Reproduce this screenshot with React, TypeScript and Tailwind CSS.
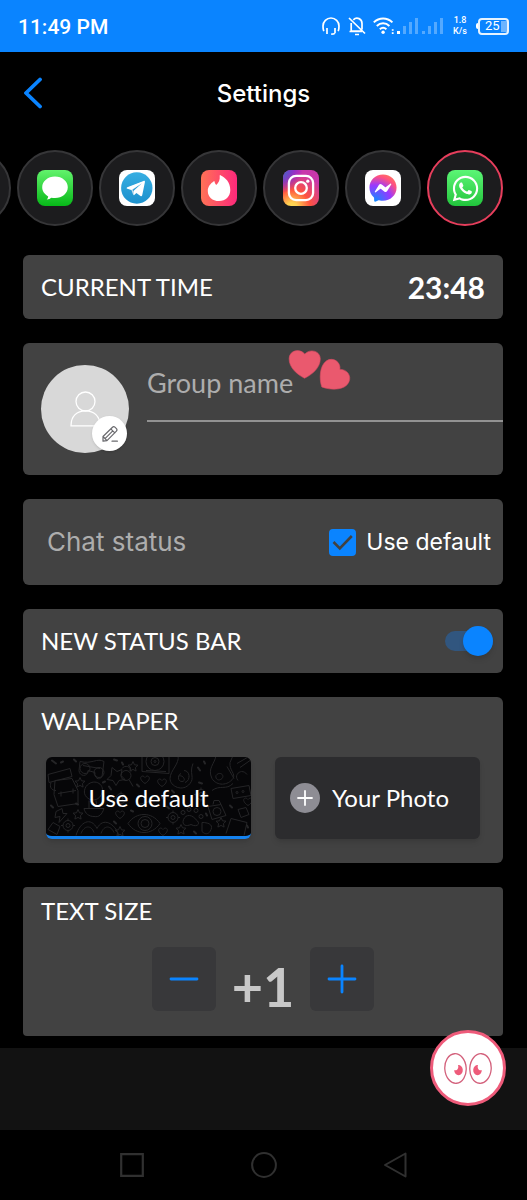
import { useState, type ReactNode } from "react";
import { FaFacebookMessenger, FaWhatsapp } from "react-icons/fa";

const card = "rounded-md bg-[#424242]";
const heading = "font-['Lato',sans-serif] text-2xl leading-8 text-white";

function StatusBar() {
  return (
    <header className="flex h-[52px] items-center justify-between bg-[#0a84ff] pl-[18px] pr-[18px] text-white">
      <time className="pt-0.5 font-['Roboto',sans-serif] text-[21px] font-medium leading-6">11:49 PM</time>
      <div className="flex items-center">
        <svg className="mr-2 h-[18px] w-[18px]" viewBox="0 0 18 18" fill="none" stroke="currentColor" strokeWidth="1.7" aria-hidden="true">
          <path d="M1.8 14.2C1 12.4 1 10.8 1 9a8 8 0 0 1 16 0c0 1.800 0 3.400-.8 5.200M5 11v6M13 11v5.200M12.800 16.400c-.8.600-2 .7-3.600.7" />
        </svg>
        <svg className="mr-[7px] h-5 w-[18px]" viewBox="0 0 18 20" fill="none" stroke="currentColor" strokeWidth="1.700" aria-hidden="true">
          <path d="M1 2l16 15.500M5.300 3.800C9 .2 14 3 14 7.500v6M3.200 7v8.200H14M1.500 15.500h12.500M7 18.500h4" />
        </svg>
        <svg className="mr-0.5 h-[18px] w-[22px]" viewBox="0 0 22 18" fill="none" stroke="currentColor" strokeWidth="2" aria-hidden="true">
          <path d="M.8 5.400c5.400-5.200 13.200-5.200 18.600 0M3.800 8.900c3.700-3.500 8.900-3.500 12.600 0M6.800 12.200c2-1.800 4.600-1.800 6.600 0" />
          <circle cx="10.100" cy="15.300" r="1.700" fill="currentColor" stroke="none" />
          <path d="M18.800 13h1.800M18.800 16.200h1.800" strokeWidth="1.700" />
        </svg>
        <svg className="mr-2 h-[18px] w-[47px]" viewBox="0 0 47 18" fill="currentColor" aria-hidden="true">
          <rect x="0" y="14" width="3" height="3" />
          <g opacity=".3">
            <rect x="6" y="9" width="3" height="8" /><rect x="12" y="5" width="3" height="12" /><rect x="18" y="1" width="3" height="16" />
            <rect x="25" y="14" width="3" height="3" /><rect x="31" y="9" width="3" height="8" /><rect x="37" y="5" width="3" height="12" /><rect x="43" y="1" width="3" height="16" />
          </g>
        </svg>
        <div className="mr-2 flex w-4 flex-col text-center font-['Roboto',sans-serif] text-[9px] font-medium leading-[11px]">
          <span>1.8</span>
          <span>K/s</span>
        </div>
        <div className="flex items-center">
          <span className="h-1.5 w-0.5 rounded-l-sm bg-white" />
          <span className="flex h-[17px] w-[31px] items-center rounded border-2 border-white/90 pl-[5px] font-['Roboto',sans-serif] text-[13px] leading-3">
            25<span className="ml-px h-[11px] w-1.5 bg-white/40" />
          </span>
        </div>
      </div>
    </header>
  );
}

function MessagesIcon() {
  return (
    <svg viewBox="0 0 36 36" className="h-9 w-9" aria-hidden="true">
      <defs>
        <linearGradient id="msg" x2="0" y2="1"><stop stopColor="#62f36c" /><stop offset="1" stopColor="#07b818" /></linearGradient>
      </defs>
      <rect width="36" height="36" rx="8" fill="url(#msg)" />
      <path d="M18 6.500c7.200 0 12.800 4.800 12.800 10.800S25.200 28.100 18 28.100c-1.300 0-2.500-.1-3.600-.4-1 .8-2.800 1.700-4.700 1.800.9-.9 1.400-2 1.500-3.100-3.700-2-6-5.300-6-9.100C5.200 11.300 10.800 6.500 18 6.500z" fill="#fff" />
    </svg>
  );
}

function TelegramIcon() {
  return (
    <svg viewBox="0 0 36 36" className="h-9 w-9" aria-hidden="true">
      <defs>
        <linearGradient id="tg" x2="0" y2="1"><stop stopColor="#36aee2" /><stop offset="1" stopColor="#1d91cd" /></linearGradient>
      </defs>
      <rect width="36" height="36" rx="8" fill="#fff" />
      <circle cx="17.800" cy="18" r="15.700" fill="url(#tg)" />
      <path d="M8.400 17.700L25.500 11.100 13.700 19.700 15 24.600c-.7 0-1-.4-1.200-.9l-1.700-4.500z" fill="#c8daea" />
      <path d="M8.300 17.200L24.600 10.900c.9-.3 1.500.2 1.300 1.300l-2.700 13c-.2 1-.9 1.200-1.700.8l-4.100-3-2.200 2c-.3.300-.5.400-.7-.4l-.1-3.500 8.500-7.800-10.700 6.700-3.800-1.300c-1-.3-1-1-.1-1.500z" fill="#fff" />
    </svg>
  );
}

function TinderIcon() {
  return (
    <svg viewBox="0 0 36 36" className="h-9 w-9" aria-hidden="true">
      <defs>
        <linearGradient id="tinder"><stop stopColor="#ff7256" /><stop offset="1" stopColor="#fd297b" /></linearGradient>
      </defs>
      <rect width="36" height="36" rx="8" fill="url(#tinder)" />
      <path d="M19.400 5.200c-.3-.2-.8 0-.7.500.5 4.200-1.200 7.400-3.500 9.200-1-.9-1.500-2-1.600-3.300 0-.4-.5-.6-.8-.3-3.200 2.200-6 5.500-6 9.600 0 5.900 4.500 10.100 11.200 10.100s11.300-4.500 11.300-11C29.300 12.200 24.500 7.500 19.400 5.200z" fill="#fff" />
    </svg>
  );
}

function InstagramIcon() {
  return (
    <svg viewBox="0 0 36 36" className="h-9 w-9" aria-hidden="true">
      <defs>
        <radialGradient id="igwarm" cx=".25" cy="1.050" r="1"><stop stopColor="#ffdd55" /><stop offset=".15" stopColor="#ffcf50" /><stop offset=".5" stopColor="#ff543e" /><stop offset="1" stopColor="#c837ab" /></radialGradient>
        <radialGradient id="igcool" cx="-.1" cy="0" r=".65"><stop stopColor="#3771c8" /><stop offset=".3" stopColor="#5a57c6" /><stop offset="1" stopColor="#6600ff" stopOpacity="0" /></radialGradient>
      </defs>
      <rect width="36" height="36" rx="8" fill="url(#igwarm)" />
      <rect width="36" height="36" rx="8" fill="url(#igcool)" />
      <g fill="none" stroke="#fff" strokeWidth="2.300">
        <rect x="5.900" y="5.900" width="24.200" height="24.200" rx="7.200" />
        <circle cx="18" cy="18" r="5.800" />
      </g>
      <circle cx="24.800" cy="11.200" r="1.600" fill="#fff" />
    </svg>
  );
}

function MessengerIcon() {
  return (
    <span className="flex h-9 w-9 items-center justify-center rounded-lg bg-white">
      <svg className="absolute h-0 w-0" aria-hidden="true">
        <defs>
          <radialGradient id="fbm" cx=".2" cy="1" r="1.100"><stop stopColor="#0a8dff" /><stop offset=".55" stopColor="#9a38ff" /><stop offset=".85" stopColor="#ff5280" /><stop offset="1" stopColor="#ff7061" /></radialGradient>
        </defs>
      </svg>
      <FaFacebookMessenger size={28} fill="url(#fbm)" aria-hidden="true" />
    </span>
  );
}

function WhatsAppIcon() {
  return (
    <span className="flex h-9 w-9 items-center justify-center rounded-lg bg-linear-to-b from-[#5bf675] to-[#20c53c] text-white">
      <FaWhatsapp size={29} aria-hidden="true" />
    </span>
  );
}

const apps: { name: string; icon: ReactNode }[] = [
  { name: "More", icon: null },
  { name: "Messages", icon: <MessagesIcon /> },
  { name: "Telegram", icon: <TelegramIcon /> },
  { name: "Tinder", icon: <TinderIcon /> },
  { name: "Instagram", icon: <InstagramIcon /> },
  { name: "Messenger", icon: <MessengerIcon /> },
  { name: "WhatsApp", icon: <WhatsAppIcon /> },
];

function Doodles() {
  return (
    <svg className="absolute inset-0 h-full w-full" viewBox="0 0 205 82" preserveAspectRatio="xMidYMid slice" fill="none" stroke="#252527" strokeWidth="1" aria-hidden="true">
      <defs>
        <path id="star" d="M0-5l1.500 3.300 3.500.4-2.600 2.400.7 3.500L0 2.900l-3.100 1.700.7-3.500L-5-1.300l3.500-.4z" />
        <path id="heart" d="M0 4C-8-1-3-6 0-2 3-6 8-1 0 4z" />
        <g id="flower"><circle r="2" /><circle r="5" /><path d="M0-5v-2M5 0h2M0 5v2M-5 0h-2" /></g>
      </defs>
      <path d="M2 19l22-6 2 8-23 6zM9 25l17-2 6 12v13l-20 3-4-12zM12 38l18-3M15 36v5M27 33v5M5 27c-2 5 1 8 5 8" />
      <path d="M34 6c12 3 17-4 24 0l-2 15c-3 5-8 1-7-4l-7-2c0 7-9 6-9 0zM37 10l17 3" />
      <circle cx="39" cy="13" r="5" /><circle cx="53" cy="17" r="5" />
      <path d="M66 12l5 4 5-2-1 6 4 4-6 1-3 5-3-5-6-1 4-4z" /><circle cx="80" cy="20" r="5" /><path d="M83 24l4 7M76 13c3-4 9-2 9 3" />
      <path d="M96 0v16l27 2V0M100 15l20 1" /><circle cx="109" cy="6" r="9" /><circle cx="109" cy="6" r="4" /><circle cx="109" cy="6" r="1" />
      <path d="M132 0c2 8-8 15-8 23 0 8 13 14 20 5 5-6-1-10 3-20M132 21c5-3 9 5 4 5s-4-7-1-8M138 15c6 0 7 10 1 12" />
      <path d="M170 0c-1 8-9 13-4 23 5 8 16 7 21 0 3-5-4-8-3-16l3-7M170 20c4-5 9 0 6 3s-7 1-6-3M181 11l7 12" />
      <path d="M191 8l12-7M194 12l10-7M192 25c-5-6 4-13 9-6M185 33l18-3 2 10-18 3z" /><circle cx="191" cy="37" r="1" /><circle cx="197" cy="36" r="1" />
      <path d="M40 31c7-9 19-3 16 6-1 5-6 9-12 7-6-3-7-8-4-13zM43 45v8M50 45l1 7M38 53h20c-2 6-5 9-10 8-5 0-9-3-10-8" />
      <path d="M30 80c4-14 15-19 21-7 6-12 18-5 22 7M35 78c3-8 10-9 13-1M55 78c3-9 10-8 13-1" />
      <path d="M82 68c8-12 24-12 32 0-8 12-24 12-32 0z" /><circle cx="99" cy="68" r="7" /><circle cx="99" cy="68" r="4" />
      <path d="M162 51l13-2 5 11-14 4zM167 49l1-4h5l2 4" /><circle cx="171" cy="56" r="4" />
      <path d="M137 66c1-6 7-9 13-2 6 5 0 8-5 5-5 2-8 1-8-3z" /><circle cx="137" cy="57" r="2" /><circle cx="143" cy="54" r="2" /><circle cx="150" cy="55" r="2" /><circle cx="155" cy="61" r="2" />
      <path d="M10 56l6-3 1 5h4l-8 9 1-6-5 1zM156 67c8 0 12 3 8 9-2 3-5 3-8 0zM180 78l5-15 16 4-3 13M2 74l5-7 7 4-3 8zM166 35c8-6 14 0 21-7M192 54l8-2 3 7-8 3zM90 49c8 0 13-5 23-3" />
      <use href="#star" x="87" y="11" /><use href="#star" x="32" y="59" /><use href="#star" x="74" y="76" /><use href="#star" x="135" y="74" /><use href="#star" x="34" y="27" /><use href="#star" x="175" y="67" />
      <use href="#heart" x="99" y="24" /><use href="#heart" x="116" y="27" /><use href="#heart" x="74" y="59" /><use href="#heart" x="202" y="46" /><use href="#heart" x="117" y="76" />
      <use href="#flower" x="127" y="62" /><use href="#flower" x="22" y="70" /><use href="#flower" x="75" y="43" /><use href="#flower" x="155" y="39" />
      <path d="M6 5l4 3M28 4l2 2M68 4l3 1M76 7l1 2M91 29l2 2M63 31l2 3M152 12l2 3M158 6l1 2M153 27l3 1M116 42l2 1M126 35l2 2M5 50l2 2M30 48l2 1M68 66l2 2M85 55l2 1M121 51l2 2M160 58l1 2M184 50l2 2M148 76l2 2M201 70l1 2M15 7l2-1M57 27l2-1" strokeWidth="2" strokeLinecap="round" />
    </svg>
  );
}

function AppPicker() {
  const [active, setActive] = useState("WhatsApp");
  return (
    <nav aria-label="Apps" className="flex justify-end gap-1.5 overflow-hidden pr-6 pt-4">
      {apps.map((app) => (
        <button
          key={app.name}
          type="button"
          aria-label={app.name}
          aria-pressed={active === app.name}
          onClick={() => setActive(app.name)}
          className={`flex h-[76px] w-[76px] shrink-0 items-center justify-center rounded-full border-2 bg-[#1c1c1e] ${active === app.name ? "border-[#e63e5c]" : "border-[#363638]"}`}
        >
          {app.icon}
        </button>
      ))}
    </nav>
  );
}

function GroupCard() {
  return (
    <section className={`${card} flex h-[132px] pl-[18px] pt-[22px]`}>
      <div className="relative h-[88px] w-[88px] shrink-0 rounded-full bg-[#d8d8d8]">
        <svg className="absolute left-[29px] top-[26px] h-9 w-[31px]" viewBox="0 0 31 36" fill="none" stroke="#fff" strokeWidth="1.300" aria-hidden="true">
          <circle cx="15.500" cy="10.500" r="9.500" />
          <path d="M1 34.800C1 25 7 19.800 15.500 19.800S30 25 30 34.800z" />
        </svg>
        <button type="button" aria-label="Edit photo" className="absolute bottom-0.5 right-0.5 flex h-[35px] w-[35px] items-center justify-center rounded-full bg-white shadow">
          <svg className="h-4 w-4" viewBox="0 0 16 16" fill="none" stroke="#69696d" strokeWidth="1.200" strokeLinejoin="round" strokeLinecap="round" aria-hidden="true">
            <path d="M1 10.500L10.500 1.200c.8-.8 1.600-.8 2.400 0l1.500 1.500c.8.800.8 1.600 0 2.400L5 14.600l-4 .6zM1 10.500L5 14.600M8.800 2.900l4 4M3 12.600l7.800-7.700M10 15.200h5.400" />
          </svg>
        </button>
      </div>
      <div className="relative ml-[18px] min-w-0 flex-1">
        <input aria-label="Group name" placeholder="Group name" className="h-[57px] w-full border-b-2 border-[#929292] bg-transparent pb-[21px] font-['Lato',sans-serif] text-[27px] leading-8 text-white outline-none placeholder:text-[#adadad] placeholder:opacity-100" />
        <svg className="absolute -top-4 left-[141px] h-[42px] w-[64px]" viewBox="0 0 64 42" aria-hidden="true">
          <g fill="#ea596e" stroke="#d94a61" strokeWidth=".6">
            <path d="M16.500 29.200C9 25.500 1 18.500 1.100 9.700 1.200 1.500 11.500-1.300 16.800 5.100 22-.8 32.300 1.800 32.300 9.800c0 9-8 15.700-15.800 19.400z" />
            <path d="M33.800 38C31 30 31.500 16.500 38.500 11.800c6.800-4.300 14.600 1.400 13.400 8.600 7.200-.3 11.900 6.500 9 12.600C57.400 41.300 43.500 41.500 33.800 38z" />
          </g>
        </svg>
      </div>
    </section>
  );
}

function StatusCard() {
  return (
    <section className={`${card} flex h-[86px] items-center pl-6 pr-3 font-['Inter',sans-serif]`}>
      <input aria-label="Chat status" placeholder="Chat status" className="min-w-0 flex-1 bg-transparent text-[26px] leading-8 text-white outline-none placeholder:text-[#adadad] placeholder:opacity-100" />
      <label className="flex items-center gap-2.5 text-[23px] leading-8 text-white">
        <span className="relative h-[27px] w-[27px]">
          <input type="checkbox" defaultChecked className="peer block h-full w-full appearance-none rounded-sm border-2 border-[#0a84ff] checked:bg-[#0a84ff]" />
          <svg className="pointer-events-none absolute inset-0 hidden h-full w-full peer-checked:block" viewBox="0 0 27 27" fill="none" stroke="#424242" strokeWidth="2.600" aria-hidden="true">
            <path d="M4.500 13l6.300 6.300L22.800 7" />
          </svg>
        </span>
        Use default
      </label>
    </section>
  );
}

function SwitchCard() {
  return (
    <label className={`${card} flex h-16 items-center justify-between pl-[18px] pr-2.5`}>
      <span className={heading}>NEW STATUS BAR</span>
      <span className="relative flex h-[30px] w-12 items-center">
        <input type="checkbox" role="switch" defaultChecked className="peer h-5 w-full appearance-none rounded-full bg-neutral-600 checked:bg-[#31567f]" />
        <span className="pointer-events-none absolute left-0 h-[30px] w-[30px] rounded-full bg-neutral-300 shadow-md peer-checked:left-[18px] peer-checked:bg-[#0a84ff]" />
      </span>
    </label>
  );
}

function WallpaperCard() {
  return (
    <section className={`${card} px-[18px] pb-6 pt-2`}>
      <h2 className={heading}>WALLPAPER</h2>
      <div className="mt-5 grid grid-cols-2 gap-6 px-[5px] font-['Lato',sans-serif] text-2xl leading-8 text-white">
        <button type="button" className="relative flex h-[82px] items-center justify-center overflow-hidden rounded-md border-b-[3px] border-[#1582ee] bg-[#060608] shadow-md">
          <Doodles />
          <span className="relative pt-0.5">Use default</span>
        </button>
        <button type="button" className="flex h-[82px] items-center gap-3 rounded-md bg-[#2c2c2e] pl-[15px] shadow-md">
          <svg className="h-[30px] w-[30px]" viewBox="0 0 30 30" fill="none" aria-hidden="true">
            <circle cx="15" cy="15" r="15" fill="#8e8d94" />
            <path d="M8 15h14M15 8v14" stroke="#fff" strokeWidth="1.800" strokeLinecap="round" />
          </svg>
          Your Photo
        </button>
      </div>
    </section>
  );
}

function TextSizeCard() {
  const [size, setSize] = useState(1);
  const button = "flex h-16 w-16 items-center justify-center rounded-md bg-[#38383a]";
  return (
    <section className="rounded-sm bg-[#424242] px-[18px] pb-6 pt-2">
      <h2 className={heading}>TEXT SIZE</h2>
      <div className="mt-5 flex h-[65px] justify-center">
        <button type="button" aria-label="Smaller" className={button} onClick={() => setSize(size - 1)}>
          <svg className="h-[30px] w-[30px]" viewBox="0 0 30 30" stroke="#0a84ff" strokeWidth="2.800" strokeLinecap="round" aria-hidden="true"><path d="M2 15h26" /></svg>
        </button>
        <output className="w-[94px] pt-2 text-center font-['Lato',sans-serif] text-[54px] font-bold leading-[64px] text-[#c8c8c8]">
          {size > 0 ? `+${size}` : size}
        </output>
        <button type="button" aria-label="Larger" className={button} onClick={() => setSize(size + 1)}>
          <svg className="h-[30px] w-[30px]" viewBox="0 0 30 30" stroke="#0a84ff" strokeWidth="2.800" strokeLinecap="round" aria-hidden="true"><path d="M2 15h26M15 2v26" /></svg>
        </button>
      </div>
    </section>
  );
}

function SystemNav() {
  const icon = "h-[26px] w-[26px]";
  return (
    <nav aria-label="System" className="flex h-[70px] items-center justify-center gap-[106px] bg-black text-[#303030]">
      <button type="button" aria-label="Recent apps">
        <svg className={icon} viewBox="0 0 26 26" fill="none" stroke="currentColor" strokeWidth="2.200" aria-hidden="true"><path d="M2.200 2.200h21.600v21.600H2.200z" /></svg>
      </button>
      <button type="button" aria-label="Home">
        <svg className={icon} viewBox="0 0 26 26" fill="none" stroke="currentColor" strokeWidth="2" aria-hidden="true"><circle cx="13" cy="13" r="11.900" /></svg>
      </button>
      <button type="button" aria-label="Back">
        <svg className={icon} viewBox="0 0 26 26" fill="none" stroke="currentColor" strokeWidth="2" strokeLinejoin="round" aria-hidden="true"><path d="M22.500 1.500v23L2 13z" /></svg>
      </button>
    </nav>
  );
}

export default function App() {
  return (
    <div className="flex min-h-screen flex-col bg-black">
      <StatusBar />
      <div className="flex h-[82px] items-center px-6">
        <button type="button" aria-label="Back" className="w-10 text-[#0a84ff]">
          <svg className="h-8 w-[18px]" viewBox="0 0 18 32" fill="none" stroke="currentColor" strokeWidth="3.800" strokeLinecap="round" strokeLinejoin="round" aria-hidden="true"><path d="M16 2.500L2 16l14 13.500" /></svg>
        </button>
        <h1 className="flex-1 pr-10 pt-0.5 text-center font-['Inter',sans-serif] text-2xl font-medium leading-8 text-white">Settings</h1>
      </div>
      <AppPicker />
      <main className="flex flex-col gap-6 pb-3 pl-[23px] pr-6 pt-[29px]">
        <section className={`${card} flex h-16 items-center justify-between px-[18px]`}>
          <h2 className={heading}>CURRENT TIME</h2>
          <time className="font-['Lato',sans-serif] text-[30px] font-bold leading-8 text-white">23:48</time>
        </section>
        <GroupCard />
        <StatusCard />
        <SwitchCard />
        <WallpaperCard />
        <TextSizeCard />
      </main>
      <footer className="relative min-h-[82px] flex-1 bg-[#121212]">
        <button type="button" aria-label="Preview" className="absolute -top-[18px] right-[21px] flex h-[76px] w-[76px] items-center justify-center rounded-full border-[3px] border-[#ee5b7a] bg-white">
          <svg className="h-[31px] w-12" viewBox="0 0 48 31" fill="none" stroke="#d3607b" strokeWidth="1.300" aria-hidden="true">
            <ellipse cx="11.500" cy="15.500" rx="10.700" ry="14.800" transform="rotate(-4 11.500 15.500)" />
            <ellipse cx="36.500" cy="15.500" rx="10.700" ry="14.800" transform="rotate(4 36.500 15.500)" />
            <g fill="#ee5b7a" stroke="none">
              <path d="M14 12a4.300 5.100 0 1 1-3.800 5c2.400 1.300 5-1.600 3.800-5z" />
              <path d="M34 12a4.300 5.100 0 1 0 3.800 5c-2.400 1.300-5-1.600-3.800-5z" />
            </g>
          </svg>
        </button>
      </footer>
      <SystemNav />
    </div>
  );
}
